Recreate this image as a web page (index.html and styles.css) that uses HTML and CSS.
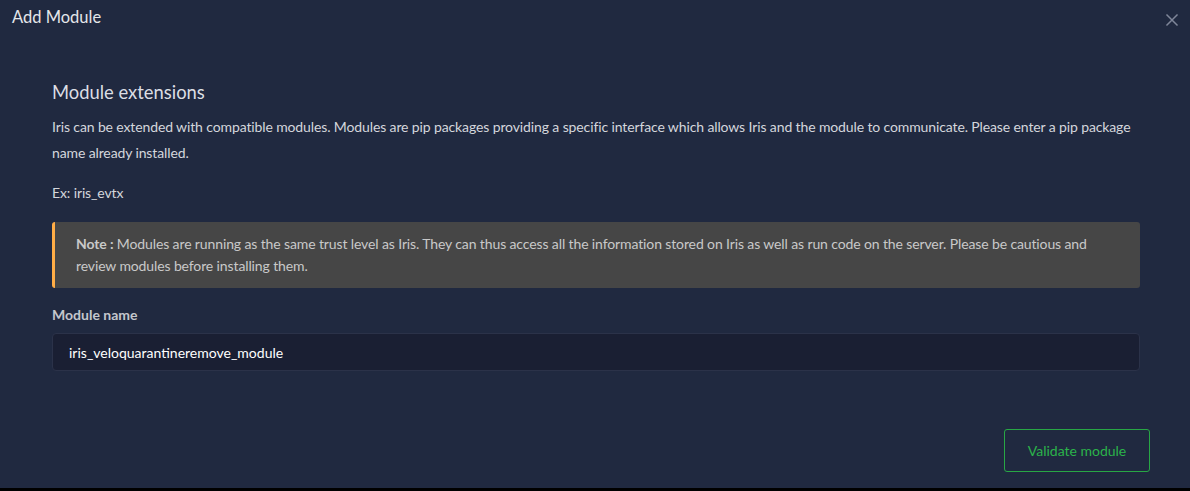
FILE: index.html
```html
<!DOCTYPE html>
<html>
<head>
<meta charset="utf-8">
<link rel="stylesheet" href="styles.css">
</head>
<body>
<div class="modal">
  <div class="modal-header">
    <h4 class="modal-title">Add Module</h4>
    <button class="close" aria-label="Close">
      <svg width="14" height="14" viewBox="0 0 14 14"><path d="M2 2 L12 12 M12 2 L2 12" stroke="#7f8699" stroke-width="1.5" stroke-linecap="square" fill="none"/></svg>
    </button>
  </div>
  <div class="modal-body">
    <h3 class="section-title">Module extensions</h3>
    <p class="desc">Iris can be extended with compatible modules. Modules are pip packages providing a specific interface which allows Iris and the module to communicate. Please enter a pip package name already installed.</p>
    <p class="desc example">Ex: iris_evtx</p>
    <div class="alert"><span class="alert-text"><b>Note :</b> Modules are running as the same trust level as Iris. They can thus access all the information stored on Iris as well as run code on the server. Please be cautious and review modules before installing them.</span></div>
    <label class="field-label">Module name</label>
    <div class="input">iris_veloquarantineremove_module</div>
  </div>
  <div class="modal-footer">
    <button class="btn-validate">Validate module</button>
  </div>
</div>
</body>
</html>
```
FILE: styles.css
```css
html, body {
  margin: 0;
  padding: 0;
  background: #000;
  font-family: Lato, "Open Sans", "Liberation Sans", sans-serif;
}
.modal {
  width: 1190px;
  height: 488px;
  background: #202940;
  color: #dcdde2;
  display: flex;
  flex-direction: column;
  box-sizing: border-box;
}
.modal-header {
  display: flex;
  justify-content: space-between;
  align-items: flex-start;
  padding: 6px 11px 0 12px;
  height: 60px;
  box-sizing: border-box;
}
.modal-title {
  margin: 0;
  font-size: 16.5px;
  font-weight: 400;
  line-height: 22px;
  color: #e4e6ea;
}
.close {
  background: none;
  border: none;
  padding: 0;
  margin-top: 7px;
  width: 14px;
  height: 14px;
}
.modal-body {
  padding: 20px 50px 0 52px;
  flex: 1;
}
.section-title {
  margin: 0 0 10px 0;
  font-size: 18.4px;
  font-weight: 400;
  line-height: 24px;
  color: #dcdee4;
}
.desc {
  margin: 0;
  font-size: 14px;
  line-height: 26px;
  letter-spacing: -0.12px;
  color: #d4d6dc;
}
.example {
  margin-top: 14px;
}
.alert {
  margin-top: 16px;
  background: #464646;
  border-left: 3px solid #ffad46;
  border-radius: 3px;
  padding: 11px 21px 11px 21px;
  font-size: 14px;
  line-height: 22px;
  letter-spacing: -0.12px;
  color: #c9c9c9;
}
.alert b {
  font-weight: 700;
}
.field-label {
  display: block;
  margin-top: 18px;
  font-size: 14px;
  font-weight: 700;
  line-height: 18px;
  color: #c4c6cc;
}
.input {
  margin-top: 9px;
  height: 38px;
  box-sizing: border-box;
  border: 1px solid #2b3249;
  border-radius: 4px;
  background: #1a1f33;
  padding: 0 16px;
  display: flex;
  align-items: center;
  font-size: 14px;
  color: #ffffff;
}
.modal-footer {
  display: flex;
  justify-content: flex-end;
  padding: 0 40px 16px 0;
}
.btn-validate {
  width: 146px;
  height: 43px;
  background: transparent;
  border: 1px solid #28a745;
  border-radius: 3px;
  color: #2bb34a;
  font-family: Lato, "Open Sans", "Liberation Sans", sans-serif;
  font-size: 14px;
}
```
